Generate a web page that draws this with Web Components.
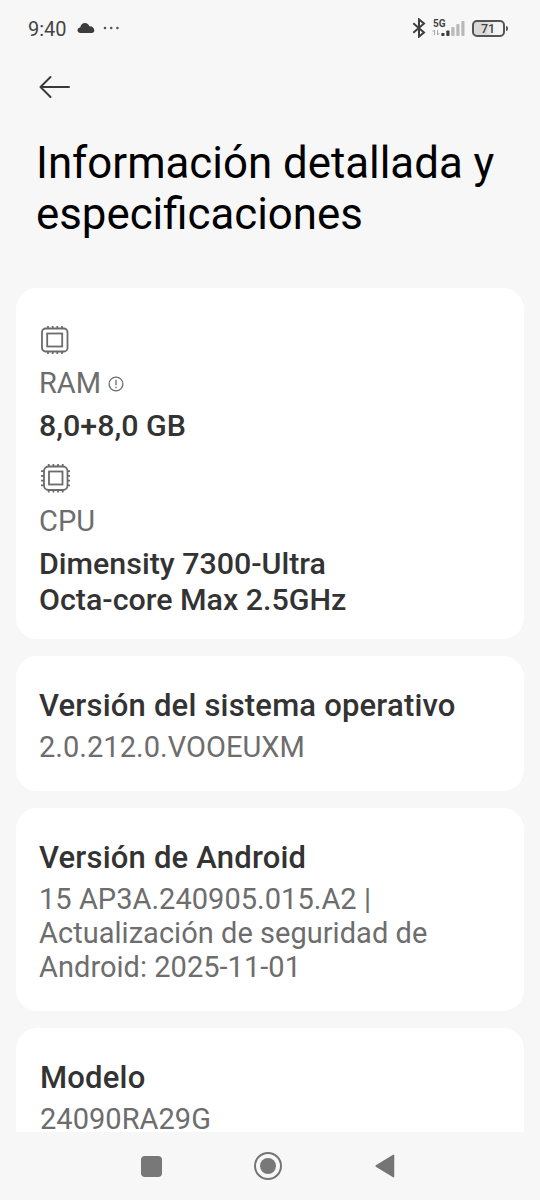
<!DOCTYPE html>
<html lang="es">
<head>
<meta charset="utf-8">
<title>Información detallada y especificaciones</title>
<style>
html,body{margin:0;height:100%;background:#f7f7f7}
body{font-family:Roboto,"Noto Sans",sans-serif;overflow:hidden}
</style>
</head>
<body>
<device-screen>
  <status-bar slot="top" time="9:40" battery="71"></status-bar>
  <page-header slot="top">Información detallada y<br>especificaciones</page-header>
  <info-card style="--h:351px;--pt:34px">
    <spec-item kind="ram" label="RAM" info><spec-line>8,0+8,0 GB</spec-line></spec-item>
    <spec-item kind="cpu" label="CPU"><spec-line>Dimensity 7300-Ultra</spec-line><spec-line>Octa-core Max 2.5GHz</spec-line></spec-item>
  </info-card>
  <info-card style="--h:135px;--pt:31px"><text-row heading="Versión del sistema operativo">2.0.212.0.VOOEUXM</text-row></info-card>
  <info-card style="--h:203px;--pt:31px"><text-row heading="Versión de Android">15 AP3A.240905.015.A2 |<br>Actualización de seguridad de<br>Android: 2025-11-01</text-row></info-card>
  <info-card style="--h:140px;--pt:31px;--pl:24px"><text-row heading="Modelo">24090RA29G</text-row></info-card>
  <nav-bar slot="bottom"></nav-bar>
</device-screen>
<script>
const define = (name, html, setup) => customElements.define(name, class extends HTMLElement {
  connectedCallback() {
    if (this.shadowRoot) return;
    const t = document.createElement('template');
    t.innerHTML = html;
    this.attachShadow({mode: 'open'}).append(t.content.cloneNode(true));
    if (setup) setup(this, this.shadowRoot);
  }
});

define('device-screen', `<style>
:host{display:flex;flex-direction:column;width:540px;height:1200px;background:#f7f7f7;overflow:hidden}
main{flex:1;min-height:0;overflow:hidden;display:flex;flex-direction:column;gap:17px;padding:0 16px}
</style><slot name="top"></slot><main><slot></slot></main><slot name="bottom"></slot>`);

define('status-bar', `<style>
:host{display:flex;align-items:center;height:56px;padding:0 32px 0 28px;box-sizing:border-box;color:#444}
.time{font-size:20px;line-height:24px;margin-top:2px}
svg{display:block}
.cloud{margin-left:10px}.dots{margin-left:8px}
.right{margin-left:auto;display:flex;align-items:center}
.net{margin-left:6px;display:block}
.batt{display:flex;align-items:center;margin-left:7px}
.cell{width:33px;height:17px;box-sizing:border-box;border:2px solid #555;border-radius:5px;background:linear-gradient(90deg,#d9d9d9 40%,#f4f4f4 71%);font-size:12.5px;font-weight:500;line-height:14px;text-align:center;color:#444;padding-right:1px}
.tip{width:2px;height:5px;background:#555;border-radius:0 2px 2px 0;margin-left:1px}
</style>
<span class="time"></span>
<svg class="cloud" width="18" height="12" viewBox="0 0 18 12"><path d="M3.500 11C1.600 11 .5 9.800.5 8.300c0-1.500 1.200-2.600 2.700-2.700C3.600 3 5.500 1 8 1c2.200 0 3.700 1.300 4.400 3.200C15.300 4.100 17.300 6 17.300 8.500c0 1.500-1 2.500-2.500 2.500z" fill="#3c3c3c"/></svg>
<svg class="dots" width="17" height="4" viewBox="0 0 17 4" fill="#555"><circle cx="2" cy="2" r="1.300"/><circle cx="8.200" cy="2" r="1.300"/><circle cx="14.400" cy="2" r="1.300"/></svg>
<div class="right">
<svg width="14" height="20" viewBox="0 0 14 20" fill="none" stroke="#3f3f3f" stroke-width="2"><path d="M1.300 5.200 12 14.400 7 18.600V1.400L12 5.600 1.300 14.800"/></svg>
<svg class="net" width="33" height="20" viewBox="0 0 33 20"><text x="1" y="8.500" font-size="10" font-weight="700" fill="#444" font-family="Roboto,sans-serif">5G</text>
<path d="M2.500 17v-5L.5 14M5.500 12v5l2-2" stroke="#aaa" fill="none"/>
<g fill="#3d3d3d"><rect x="9.300" y="15" width="3.200" height="3" rx=".8"/><rect x="14.300" y="12.500" width="3.200" height="5.500" rx=".8"/></g><g fill="#b9b9b9"><rect x="19.300" y="9" width="3.200" height="9" rx=".8"/><rect x="24.300" y="6" width="3.200" height="12" rx=".8"/><rect x="29.300" y="3" width="3.200" height="15" rx=".8"/></g></svg>
<div class="batt"><div class="cell"></div><div class="tip"></div></div>
</div>`, (h, r) => {
  r.querySelector('.time').textContent = h.getAttribute('time');
  r.querySelector('.cell').textContent = h.getAttribute('battery');
});

define('page-header', `<style>
:host{display:block;height:232px;box-sizing:border-box;padding:19px 20px 0 36px;color:#000}
svg{display:block;margin-left:3px}
h1{margin:39px 0 0;font-weight:400;font-size:43.8px;line-height:51px;white-space:nowrap}
</style>
<svg width="32" height="24" viewBox="0 0 32 24" fill="none" stroke="#3a3a3a" stroke-width="2" stroke-linecap="round" stroke-linejoin="round"><path d="M30 12H1.500M11.500 2 1.500 12l10 10"/></svg>
<h1><slot></slot></h1>`);

define('info-card', `<style>
:host{display:block;flex:none;height:var(--h);box-sizing:border-box;padding:var(--pt) 23px 0 var(--pl,23px);background:#fff;border-radius:21px;overflow:hidden}
</style><slot></slot>`);

define('spec-line', `<style>
:host{display:block;font-weight:500;font-size:30.4px;line-height:36px;color:#333;white-space:nowrap}
</style><slot></slot>`);

const chip = {
  ram: `<rect x="3" y="4.500" width="25.500" height="23" rx="3.500"/><rect x="8.200" y="9.500" width="15" height="13"/><path d="M9 4.500V2M13.700 4.500V2M18.300 4.500V2M23 4.500V2M9 30v-2.500M13.700 30v-2.500M18.300 30v-2.500M23 30v-2.500"/>`,
  cpu: `<rect x="5" y="4.500" width="23.500" height="23.500" rx="4.500"/><rect x="10" y="9.500" width="13.500" height="13"/><path d="M9.700 4.500V2M14.400 4.500V2M19 4.500V2M23.700 4.500V2M9.700 30.500V28M14.400 30.500V28M19 30.500V28M23.700 30.500V28M5 9.200H2M5 13.900H2M5 18.600H2M5 23.300H2M31 9.200h-2.500M31 13.900h-2.500M31 18.600h-2.500M31 23.300h-2.500"/>`
};
define('spec-item', `<style>
:host{display:block;height:138px}
.icon{display:block;height:36px;margin-bottom:-1px;padding-top:2px;box-sizing:content-box}
.label{display:flex;align-items:center;height:49px;font-size:29px;line-height:49px;color:#6d6d6d}
.info{margin-left:7px}
</style>
<svg class="icon" width="33" height="36" viewBox="0 0 33 36" fill="none" stroke="#6b6b6b" stroke-width="1.800"></svg>
<div class="label"><span></span></div><slot></slot>`, (h, r) => {
  r.querySelector('.icon').innerHTML = chip[h.getAttribute('kind')];
  r.querySelector('span').textContent = h.getAttribute('label');
  if (h.hasAttribute('info')) r.querySelector('.label').insertAdjacentHTML('beforeend',
    `<svg class="info" width="16" height="16" viewBox="0 0 16 16" fill="none" stroke="#6b6b6b" stroke-width="1.300"><circle cx="8" cy="8" r="6.900"/><path d="M8 3.700v5.500M8 10.800v1.500"/></svg>`);
});

define('text-row', `<style>
:host{display:block;white-space:nowrap}
h2{margin:0;font-weight:500;font-size:31px;letter-spacing:.2px;line-height:38px;color:#333}
p{margin:5px 0 0;font-size:29px;letter-spacing:.03px;line-height:34px;color:#6d6d6d}
</style><h2></h2><p><slot></slot></p>`, (h, r) => {
  r.querySelector('h2').textContent = h.getAttribute('heading');
});

define('nav-bar', `<style>
:host{display:flex;flex:none;height:68px;background:#f7f7f7;padding:0 145px 0 141px;box-sizing:border-box;align-items:center;justify-content:space-between}
.home{margin-right:1px}
</style>
<svg width="21" height="21"><rect width="21" height="21" rx="4" fill="#787878"/></svg>
<svg class="home" width="30" height="30" viewBox="0 0 30 30"><circle cx="15" cy="15" r="13" fill="none" stroke="#747474" stroke-width="2"/><circle cx="15" cy="15" r="8" fill="#787878"/></svg>
<svg width="20" height="24" viewBox="0 0 20 24"><path d="M18.500 1.300v21.400L1.200 12z" fill="#757575" stroke="#757575" stroke-width="1.500" stroke-linejoin="round"/></svg>`);
</script>
</body>
</html>
